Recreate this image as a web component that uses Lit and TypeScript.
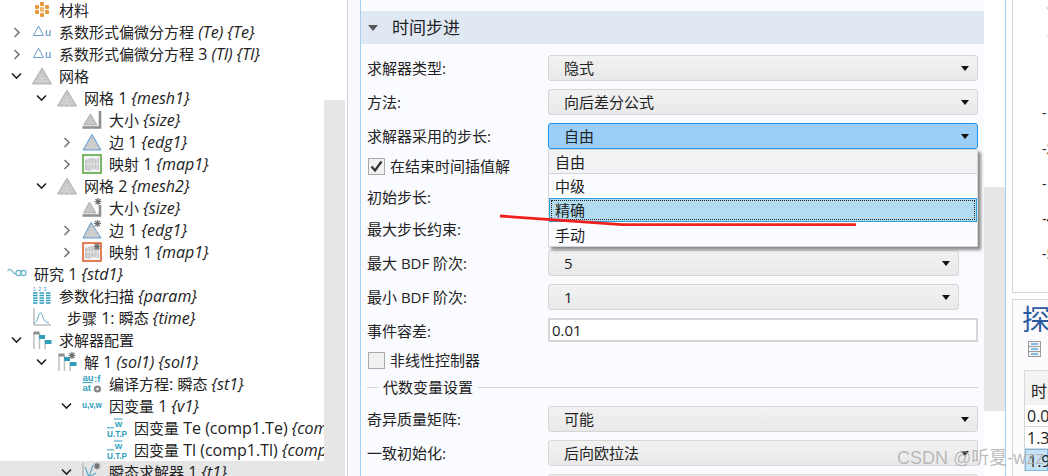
import { LitElement, css, html, svg } from 'lit';
import { customElement } from 'lit/decorators.js';

type IconName =
  | 'material' | 'pde' | 'mesh' | 'size' | 'edge' | 'map' | 'sizeStar' | 'edgeStar' | 'mapStar'
  | 'study' | 'param' | 'time' | 'solver' | 'solution' | 'compile' | 'uvw' | 'utp' | 'transient';

interface TreeRow {
  level: number;
  chevron?: 'open' | 'closed';
  icon: IconName;
  name: string;
  tag?: string;
  indent?: boolean;
  selected?: boolean;
}

const TREE: TreeRow[] = [
  { level: 1, icon: 'material', name: '材料' },
  { level: 1, chevron: 'closed', icon: 'pde', name: '系数形式偏微分方程 ', tag: '(Te) {Te}' },
  { level: 1, chevron: 'closed', icon: 'pde', name: '系数形式偏微分方程 3 ', tag: '(Tl) {Tl}' },
  { level: 1, chevron: 'open', icon: 'mesh', name: '网格' },
  { level: 2, chevron: 'open', icon: 'mesh', name: '网格 1 ', tag: '{mesh1}' },
  { level: 3, icon: 'size', name: '大小 ', tag: '{size}' },
  { level: 3, chevron: 'closed', icon: 'edge', name: '边 1 ', tag: '{edg1}' },
  { level: 3, chevron: 'closed', icon: 'map', name: '映射 1 ', tag: '{map1}' },
  { level: 2, chevron: 'open', icon: 'mesh', name: '网格 2 ', tag: '{mesh2}' },
  { level: 3, icon: 'sizeStar', name: '大小 ', tag: '{size}' },
  { level: 3, chevron: 'closed', icon: 'edgeStar', name: '边 1 ', tag: '{edg1}' },
  { level: 3, chevron: 'closed', icon: 'mapStar', name: '映射 1 ', tag: '{map1}' },
  { level: 0, icon: 'study', name: '研究 1 ', tag: '{std1}' },
  { level: 1, icon: 'param', name: '参数化扫描 ', tag: '{param}' },
  { level: 1, icon: 'time', name: '步骤 1: 瞬态 ', tag: '{time}', indent: true },
  { level: 1, chevron: 'open', icon: 'solver', name: '求解器配置' },
  { level: 2, chevron: 'open', icon: 'solution', name: '解 1 ', tag: '(sol1) {sol1}' },
  { level: 3, icon: 'compile', name: '编译方程: 瞬态 ', tag: '{st1}' },
  { level: 3, chevron: 'open', icon: 'uvw', name: '因变量 1 ', tag: '{v1}' },
  { level: 4, icon: 'utp', name: '因变量 Te (comp1.Te) ', tag: '{comp1_Te}' },
  { level: 4, icon: 'utp', name: '因变量 Tl (comp1.Tl) ', tag: '{comp1_Tl}' },
  { level: 3, chevron: 'open', icon: 'transient', name: '瞬态求解器 1 ', tag: '{t1}', selected: true },
];

const AXIS_TICKS = [
  { y: 2, text: '1', cls: 'tick dark' },
  { y: 30, text: '1', cls: 'tick faint' },
  { y: 104, text: '-1', cls: 'tick' },
  { y: 140, text: '-2', cls: 'tick' },
  { y: 175, text: '-1', cls: 'tick' },
  { y: 210, text: '-4', cls: 'tick' },
  { y: 245, text: '-5', cls: 'tick' },
];

const POPUP_ITEMS = ['自由', '中级', '精确', '手动'];

const TEAL = '#2f9ebd';

const star = (x: number, y: number) => svg`
  <g stroke="#6f6f72" stroke-width="1.2">
    <path d="M${x - 3.5} ${y}H${x + 3.5}M${x} ${y - 3.5}V${y + 3.5}M${x - 2.5} ${y - 2.5}L${x + 2.5} ${y + 2.5}M${x - 2.5} ${y + 2.5}L${x + 2.5} ${y - 2.5}" />
  </g>`;

const meshFill = (pts: string, stroke = '#b0b0b3') => svg`
  <polygon points=${pts} fill="#c6c6c9" stroke=${stroke} stroke-width="1" />`;

const meshLines = svg`<path d="M5 12H15M3 15H17M7.5 9H12.5M7 18L11 11M13 18L9 11" stroke="#dcdcde" stroke-width=".7" fill="none" />`;

const sheet = svg`
  <path d="M3 6L9 4L15 5L17 3V16L11 15L7 17L3 16Z" fill="#c4c4c7" />
  <path d="M6 5V17M9 4V16M12 5V15M15 5V16M3 10H17" stroke="#f0f0f0" stroke-width=".8" fill="none" />`;

const bars = svg`
  <path d="M2 3V19M7.5 3V19M13 10V19" stroke="#c0c0c3" stroke-width="1.5" />
  <rect x="1.5" y="1.5" width="6" height="3" fill="#8d8d90" />
  <rect x="7" y="5" width="6" height="4" fill=${TEAL} />
  <rect x="13" y="10" width="6.5" height="4" fill=${TEAL} />`;

const ICONS: Record<IconName, unknown> = {
  material: svg`
    <g fill="#e8973a">
      <rect x="8" y="2" width="4" height="4" rx="1" />
      <rect x="3" y="5" width="4" height="4" rx="1" />
      <rect x="13" y="5" width="4" height="4" rx="1" />
      <rect x="8" y="7" width="4" height="5" rx="1" fill="#f2b866" />
      <rect x="3" y="10" width="4" height="4" rx="1" />
      <rect x="13" y="10" width="4" height="4" rx="1" />
      <rect x="8" y="13" width="4" height="4" rx="1" />
    </g>`,
  pde: svg`
    <polygon points="6.5,4 1.5,13.5 11.5,13.5" fill="none" stroke="#6d9dd0" stroke-width="1" />
    <text x="13" y="13.5" font-size="11" font-family="Liberation Sans" fill="#4c86bd">u</text>`,
  mesh: svg`${meshFill('10,2 0.5,18 19.5,18')}${meshLines}`,
  size: svg`
    ${meshFill('8.5,4 1.5,15 15,15')}
    <path d="M18 1V17.5H0.5" fill="none" stroke="#8f8f92" stroke-width="2.6" />`,
  edge: svg`${meshFill('10,2.5 1,18 19,18', '#5c9bd6')}${meshLines}`,
  map: svg`<rect x="1" y="1" width="18" height="18" fill="#f5f5f5" stroke="#5aa646" stroke-width="1.6" />${sheet}`,
  sizeStar: svg`
    ${meshFill('7.5,4 1.5,15 14,15')}
    <path d="M18 7V17.5H0.5" fill="none" stroke="#8f8f92" stroke-width="2.6" />
    ${star(16, 3.5)}`,
  edgeStar: svg`${meshFill('9,2.5 1,18 19,18', '#5c9bd6')}${meshLines}${star(15.5, 3.5)}`,
  mapStar: svg`<rect x="1" y="1" width="18" height="18" fill="#f5f5f5" stroke="#e0622e" stroke-width="1.6" />${sheet}${star(15, 4.5)}`,
  study: svg`
    <g fill="none" stroke="#62b3c6" stroke-width="1.1">
      <path d="M0.5 7C2 4.5 4 5 6 8C7 9.5 8 10 9 9.5" />
      <circle cx="11.5" cy="9" r="2.6" />
      <circle cx="16.5" cy="9" r="2.6" />
    </g>`,
  param: svg`
    <text x="1" y="4.5" font-size="5.2" font-family="Liberation Sans" fill="#4c97c4" letter-spacing="2.4">123</text>
    <path d="M1 7H5.5M1 9.5H5.5M1 12H5.5M1 14.5H5.5M1 17H5.5M7.5 7H12M7.5 9.5H12M7.5 12H12M7.5 14.5H12M7.5 17H12M14 7H18.5M14 9.5H18.5M14 12H18.5M14 14.5H18.5M14 17H18.5" stroke=${TEAL} stroke-width="1.6" />`,
  time: svg`
    <path d="M2 0V17H19" fill="none" stroke="#9b9b9e" stroke-width="1" />
    <path d="M2 15C6 15 6 5 8.5 5C11 5 10 14 17 15" fill="none" stroke="#5fa9c9" stroke-width="1" />`,
  solver: bars,
  solution: svg`${bars}${star(15, 3.5)}`,
  compile: svg`
    <text x="0.5" y="7" font-size="9.5" font-weight="700" font-family="Liberation Sans" fill=${TEAL}>au</text>
    <text x="0.5" y="16.5" font-size="9.5" font-weight="700" font-family="Liberation Sans" fill=${TEAL}>at</text>
    <path d="M0.5 8.6H10.5" stroke=${TEAL} stroke-width="1" />
    <text x="12" y="7.5" font-size="9.5" font-weight="700" font-family="Liberation Sans" fill=${TEAL}>:f</text>
    <circle cx="15.5" cy="15" r="3.6" fill="#858588" />
    <circle cx="15.5" cy="15" r="1.2" fill="#fff" />`,
  uvw: svg`<text x="0" y="12" font-size="8.4" font-weight="700" font-family="Liberation Sans" fill=${TEAL} textLength="20" lengthAdjust="spacingAndGlyphs">u,v,w</text>`,
  utp: svg`
    <text x="11.5" y="8.5" text-anchor="middle" font-size="8" font-weight="700" font-family="Liberation Sans" fill=${TEAL}>W</text>
    <path d="M7 1H15.5M0 9.8H7" stroke=${TEAL} stroke-width="1" />
    <text x="0" y="19" font-size="8.6" font-weight="700" font-family="Liberation Sans" fill=${TEAL} textLength="20" lengthAdjust="spacingAndGlyphs">U.T.P</text>`,
  transient: svg`
    <path d="M1 1V19M1 19H19" stroke="#a5a5a8" stroke-width="1" fill="none" />
    <path d="M3 5L7 15L11 3M7 15L14 11" stroke="#5fa9c9" stroke-width="1.2" fill="none" />
    ${star(15, 4)}`,
};

@customElement('app-root')
export class AppRoot extends LitElement {
  static styles = css`
    :host {
      display: flex;
      width: 1048px;
      height: 476px;
      overflow: hidden;
      position: relative;
      background: #fff;
      color: #222;
      font: 15px/22px "Open Sans", "Noto Sans CJK SC", sans-serif;
    }

    /* tree */
    .tree {
      width: 324px;
      flex: none;
      overflow: hidden;
      margin-top: -1px;
    }
    .row {
      display: flex;
      align-items: center;
      height: 22px;
      white-space: nowrap;
    }
    .row.selected { background: #e5e5e6; }
    .chev {
      width: 25px;
      flex: none;
      display: flex;
      justify-content: center;
    }
    .ico {
      width: 25px;
      height: 22px;
      flex: none;
      margin-right: 5px;
      display: flex;
      align-items: center;
      justify-content: center;
    }
    .ico svg { width: 20px; height: 20px; display: block; }
    .label { font-size: 16px; }
    .label.indent { margin-left: 8px; }
    .cjk { font-size: 15px; }
    .tag { font-style: italic; }

    /* scrollbars */
    .tree-scroll {
      width: 21px;
      flex: none;
      display: flex;
      flex-direction: column;
      padding-top: 100px;
      box-sizing: border-box;
    }
    .thumb { flex: 1; background: #e6e6e7; }

    /* settings */
    .gutter {
      width: 14px;
      flex: none;
      box-sizing: border-box;
      margin-left: 2px;
      background: #f9fafd;
      border-left: 1px solid #d5d5d7;
      border-right: 1px solid #a6d0f2;
    }
    .settings {
      width: 623px;
      flex: none;
      background: #fafbff;
      padding-top: 11px;
      box-sizing: border-box;
    }
    .section {
      display: flex;
      align-items: center;
      height: 33px;
      background: #dfe8f3;
      font-size: 17px;
    }
    .section i {
      width: 0;
      height: 0;
      margin: 0 14px 0 7px;
      border: 5px solid transparent;
      border-top: 6px solid #555;
      border-bottom: 0;
    }
    .form {
      display: grid;
      grid-template-columns: 181px 430px;
      grid-template-rows: 34px 34px 32px 29px 32px 34px 34px 34px 31px 28px 29px 34px 34px 34px;
      padding: 11px 0 0 6px;
    }
    .lab { height: 26px; line-height: 26px; }
    .span { grid-column: 1 / 3; }
    .check {
      display: flex;
      align-items: center;
      gap: 5px;
      height: 22px;
      padding-left: 1px;
    }
    .box {
      width: 15px;
      height: 15px;
      flex: none;
      background: #f1f1f1;
      border: 1px solid #a9a9a9;
      display: flex;
    }
    .combo {
      position: relative;
      display: flex;
      align-items: center;
      justify-content: space-between;
      height: 26px;
      box-sizing: border-box;
      padding: 0 8px 0 15px;
      border: 1px solid #d6d6d6;
      border-radius: 3px;
      background: linear-gradient(#f2f2f2, #e9e9e9);
    }
    .combo.short { width: 411px; }
    .combo.open {
      background: #9bcff7;
      border-color: #2196e8;
    }
    .combo .arrow {
      width: 0;
      height: 0;
      border: 4.5px solid transparent;
      border-top: 5px solid #111;
      border-bottom: 0;
    }
    .input {
      height: 24px;
      line-height: 21px;
      box-sizing: border-box;
      padding-left: 2px;
      background: #fff;
      border: 2px solid #d6d6d6;
    }
    .rule {
      display: flex;
      align-items: center;
      gap: 5px;
      height: 20px;
      width: 611px;
    }
    .rule::before { content: ""; width: 11px; height: 1px; background: #d5d5d7; }
    .rule::after { content: ""; flex: 1; height: 1px; background: #d5d5d7; }

    /* open dropdown */
    .popup {
      position: absolute;
      z-index: 2;
      top: 25px;
      left: -1px;
      width: 430px;
      height: 98px;
      box-sizing: border-box;
      background: #fbfcff;
      border: 1px solid #d6d6d6;
      box-shadow: 3px 3px 3px #8a8a8a;
    }
    .opt {
      height: 24px;
      line-height: 25px;
      box-sizing: border-box;
      padding-left: 6px;
    }
    .opt.first { background: #f2f3f5; border-bottom: 1px solid #d6d6d6; }
    .opt.active {
      background: #b3dcf0;
      border: 1px solid #2aa0dc;
      outline: 1px dotted #222;
      outline-offset: -3px;
      padding-left: 5px;
      line-height: 23px;
    }
    .opt:last-child { line-height: 27px; }

    .settings-scroll {
      width: 22px;
      flex: none;
      display: flex;
      flex-direction: column;
      padding: 187px 0 65px;
      box-sizing: border-box;
      border-right: 1px solid #a6d0f2;
    }

    /* right side */
    .side {
      flex: 1;
      min-width: 0;
      display: flex;
      flex-direction: column;
      padding-left: 6px;
    }
    .plot {
      position: relative;
      height: 293px;
      flex: none;
      box-sizing: border-box;
      border-left: 1px solid #d8d8d8;
      border-bottom: 1px solid #d8d8d8;
      font-size: 14px;
      overflow: hidden;
    }
    .tick { position: absolute; left: 29px; height: 18px; line-height: 18px; color: #222; }
    .tick.dark { left: 33px; }
    .tick.faint { left: 33px; color: #aaa; }
    .probe {
      flex: 1;
      margin-top: 6px;
      border-left: 1px solid #d8d8d8;
      border-top: 1px solid #d8d8d8;
      background: #fcfcfe;
      overflow: hidden;
    }
    .probe h3 {
      margin: 0;
      height: 36px;
      padding: 2px 0 0 9px;
      box-sizing: border-box;
      font: 400 28px/32px "Noto Sans CJK SC", sans-serif;
      color: #2c5a9e;
      white-space: nowrap;
    }
    .probe .tool { display: block; margin: 5px 0 13px 15px; }
    .table {
      margin-left: 11px;
      border-left: 1px solid #d8d8d8;
      border-top: 1px solid #d8d8d8;
      white-space: nowrap;
      font-size: 16px;
    }
    .th {
      height: 34px;
      line-height: 40px;
      padding-left: 6px;
      background: #f3f3f4;
    }
    .td {
      height: 21px;
      line-height: 23px;
      padding-left: 2px;
      border-bottom: 1px solid #d8d8d8;
      background: #fff;
    }
    .td.sel { height: 22px; background: #c6e2f6; border: 1px solid #7ab6e2; box-sizing: border-box; }

    /* overlays */
    .mark {
      position: absolute;
      z-index: 3;
      left: 0;
      top: 0;
      pointer-events: none;
    }
    .watermark {
      position: absolute;
      z-index: 4;
      left: 897px;
      top: 446px;
      font: 18px/24px "Liberation Sans", "Noto Sans CJK SC", sans-serif;
      color: rgba(130, 130, 130, 0.55);
      text-shadow: 0 0 1px rgba(255, 255, 255, 0.6);
      white-space: nowrap;
    }
  `;

  // tree latin runs are a touch larger than the CJK ones
  mixed(text: string) {
    return text.split(/([\u4e00-\u9fff]+)/).map((part, i) =>
      i % 2 ? html`<span class="cjk">${part}</span>` : part);
  }

  renderRow(r: TreeRow) {
    const pad = r.level === 0 ? 4 : 4 + 25 * (r.level - 1);
    const chev = r.chevron === 'open'
      ? html`<svg width="11" height="8" viewBox="0 0 11 8"><path d="M1 1.5L5.5 6L10 1.5" fill="none" stroke="#222" stroke-width="1.6" /></svg>`
      : r.chevron === 'closed'
        ? html`<svg width="8" height="11" viewBox="0 0 8 11"><path d="M1.5 1L6 5.5L1.5 10" fill="none" stroke="#777" stroke-width="1.6" /></svg>`
        : null;
    return html`
      <div class="row ${r.selected ? 'selected' : ''}" style="padding-left:${pad}px">
        ${r.level > 0 ? html`<span class="chev">${chev}</span>` : null}
        <span class="ico"><svg viewBox="0 0 20 20">${ICONS[r.icon]}</svg></span>
        <span class="label ${r.indent ? 'indent' : ''}">${this.mixed(r.name)}<span class="tag">${r.tag ?? ''}</span></span>
      </div>
    `;
  }

  combo(value: string, short = false) {
    return html`<div class="combo ${short ? 'short' : ''}"><span>${value}</span><span class="arrow"></span></div>`;
  }

  render() {
    return html`
      <div class="tree">${TREE.map((r) => this.renderRow(r))}</div>
      <div class="tree-scroll"><div class="thumb"></div></div>
      <div class="gutter"></div>

      <div class="settings">
        <div class="section"><i></i>时间步进</div>
        <div class="form">
          <div class="lab">求解器类型:</div>${this.combo('隐式')}
          <div class="lab">方法:</div>${this.combo('向后差分公式')}
          <div class="lab">求解器采用的步长:</div>
          <div class="combo open">
            <span>自由</span><span class="arrow"></span>
            <div class="popup">
              ${POPUP_ITEMS.map((t, i) => html`<div class="opt ${i === 0 ? 'first' : ''} ${i === 2 ? 'active' : ''}">${t}</div>`)}
            </div>
          </div>
          <div class="check span">
            <span class="box">
              <svg viewBox="0 0 15 15" width="15" height="15"><path d="M2.5 7.5L6 11.5L12.5 2.5" fill="none" stroke="#333" stroke-width="2.2" /></svg>
            </span>在结束时间插值解
          </div>
          <div class="lab span">初始步长:</div>
          <div class="lab span">最大步长约束:</div>
          <div class="lab">最大 BDF 阶次:</div>${this.combo('5', true)}
          <div class="lab">最小 BDF 阶次:</div>${this.combo('1', true)}
          <div class="lab">事件容差:</div><div class="input">0.01</div>
          <div class="check span"><span class="box"></span>非线性控制器</div>
          <div class="rule span">代数变量设置</div>
          <div class="lab">奇异质量矩阵:</div>${this.combo('可能')}
          <div class="lab">一致初始化:</div>${this.combo('后向欧拉法')}
          <div class="lab"></div>${this.combo('')}
        </div>
      </div>

      <div class="settings-scroll"><div class="thumb"></div></div>

      <div class="side">
        <div class="plot">
          ${AXIS_TICKS.map((t) => html`<span class=${t.cls} style="top:${t.y}px">${t.text}</span>`)}
        </div>
        <div class="probe">
          <h3>探针表</h3>
          <svg class="tool" width="13" height="16" viewBox="0 0 13 16">
            <rect x=".5" y=".5" width="12" height="15" fill="#f4f4f4" stroke="#9a9a9a" />
            <path d="M.5 5.5H12.5M.5 10.5H12.5" stroke="#9a9a9a" />
            <path d="M3 3H10M3 8H10M3 13H10" stroke="#58a6e0" stroke-width="1.6" />
          </svg>
          <div class="table">
            <div class="th">时间</div>
            <div class="td">0.0</div>
            <div class="td">1.3</div>
            <div class="td sel">1.9</div>
          </div>
        </div>
      </div>

      <svg class="mark" width="1048" height="476">
        <path d="M500 216L622 224.6L856 224.6" fill="none" stroke="#f0201c" stroke-width="2.8" />
      </svg>
      <div class="watermark">CSDN @听夏-wzz</div>
    `;
  }
}
